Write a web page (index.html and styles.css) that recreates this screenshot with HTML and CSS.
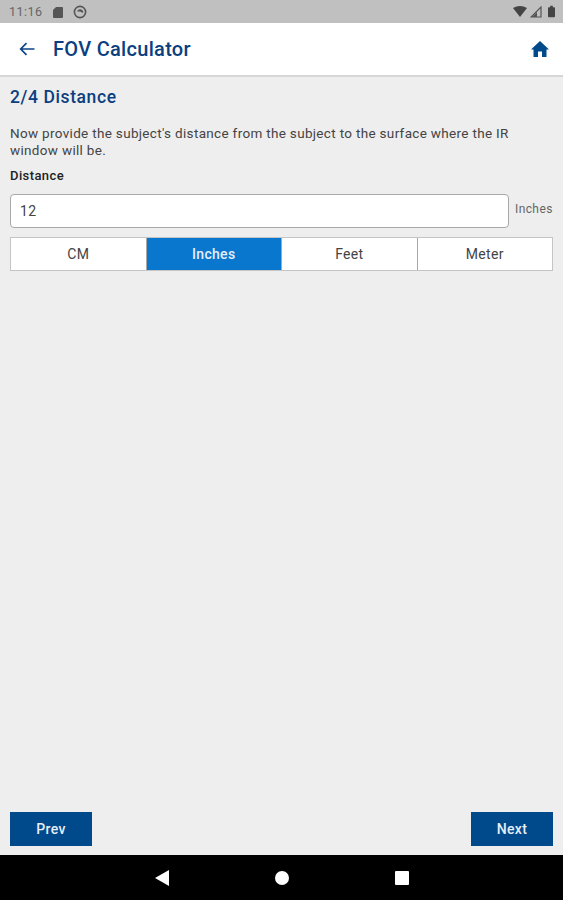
FILE: index.html
```html
<!DOCTYPE html>
<html lang="en">
<head>
    <meta charset="UTF-8">
    <meta name="viewport" content="width=device-width, initial-scale=1.0">
    <title>FOV Calculator</title>
    <link rel="stylesheet" href="styles.css">
</head>
<body>
    <div class="screen">
        <div class="status-bar">
            <div class="status-left">
                <span class="status-time">11:16</span>
                <svg class="status-icon" width="10" height="12" viewBox="0 0 10 12"><path d="M3 1h6a1 1 0 0 1 1 1v9a1 1 0 0 1-1 1H1a1 1 0 0 1-1-1V4z" fill="#555"/></svg>
                <svg class="status-icon" width="14" height="14" viewBox="0 0 14 14"><circle cx="7" cy="7" r="5.6" fill="none" stroke="#555" stroke-width="1.6"/><path d="M4 6.5 A3.2 3.2 0 0 1 10 6 L10.2 8 L7 6.6 Z" fill="#555"/></svg>
            </div>
            <div class="status-right">
                <svg width="14" height="11" viewBox="0 0 14 11"><path d="M0 2 Q7 -2 14 2 L7 11 Z" fill="#444"/></svg>
                <svg width="12" height="12" viewBox="0 0 12 12"><path d="M11 1 V11 H1 Z" fill="none" stroke="#555" stroke-width="1.2"/><path d="M7 6 V11 H2 Z" fill="#555"/></svg>
                <svg class="battery-icon" width="7" height="13" viewBox="0 0 8 13"><path d="M2.5 0h3v1.5H7a1 1 0 0 1 1 1V12a1 1 0 0 1-1 1H1a1 1 0 0 1-1-1V2.500a1 1 0 0 1 1-1h1.500z" fill="#444"/></svg>
            </div>
        </div>

        <header class="app-bar">
            <svg class="back-icon" width="16" height="14" viewBox="0 0 16 14"><path d="M15.500 7H1.800M7.500 1.200 1.700 7l5.800 5.800" fill="none" stroke="#0b4586" stroke-width="1.700"/></svg>
            <h1 class="app-title">FOV Calculator</h1>
            <svg class="home-icon" width="18" height="16" viewBox="0 0 18 16"><path d="M9 0 18 8.500H15.500V16H11V10.500H7V16H2.500V8.500H0Z" fill="#004a8c"/></svg>
        </header>

        <main class="content">
            <h2 class="step-title">2/4 Distance</h2>
            <p class="intro">Now provide the subject's distance from the subject to the surface where the IR window will be.</p>
            <label class="field-label" for="distance">Distance</label>
            <div class="field-row">
                <input class="field-input" id="distance" type="text" value="12">
                <span class="field-unit">Inches</span>
            </div>
            <div class="unit-tabs">
                <button class="unit-tab">CM</button>
                <button class="unit-tab active">Inches</button>
                <button class="unit-tab">Feet</button>
                <button class="unit-tab">Meter</button>
            </div>
            <div class="actions">
                <button class="nav-button">Prev</button>
                <button class="nav-button">Next</button>
            </div>
        </main>

        <nav class="nav-bar">
            <svg width="14" height="16" viewBox="0 0 14 16"><path d="M14 0V16L0 8Z" fill="#fff"/></svg>
            <span class="nav-circle"></span>
            <span class="nav-square"></span>
        </nav>
    </div>
</body>
</html>
```

FILE: styles.css
```css
* {
    box-sizing: border-box;
}

body {
    margin: 0;
    font-family: Roboto, "Liberation Sans", sans-serif;
    background-color: #eeeeee;
}

.screen {
    display: flex;
    flex-direction: column;
    height: 900px;
}

.status-bar {
    display: flex;
    justify-content: space-between;
    align-items: center;
    height: 23px;
    padding: 0 8px 0 9px;
    background-color: #c0c0c0;
}

.status-left {
    display: flex;
    align-items: center;
    gap: 10px;
}

.status-time {
    font-size: 12.5px;
    letter-spacing: 0.5px;
    color: #666;
}

.status-right {
    display: flex;
    align-items: center;
    gap: 3px;
}

.battery-icon {
    margin-left: 3px;
}

.app-bar {
    display: flex;
    align-items: center;
    height: 54px;
    padding: 0 14px 0 19px;
    background-color: #fff;
    border-bottom: 2px solid #d6d6d6;
}

.app-title {
    flex: 1;
    margin: 0 0 0 18px;
    font-size: 20px;
    letter-spacing: 0.3px;
    font-weight: 500;
    color: #0b3f7f;
}

.content {
    flex: 1;
    display: flex;
    flex-direction: column;
    padding: 9px 10px 9px;
}

.step-title {
    margin: 0 0 17px;
    font-size: 17.500px;
    letter-spacing: 0.6px;
    line-height: 22px;
    font-weight: 500;
    color: #0b3f7f;
}

.intro {
    margin: 0 0 8px;
    font-size: 13.500px;
    letter-spacing: 0.32px;
    line-height: 17px;
    color: #444;
}

.field-label {
    font-size: 13px;
    letter-spacing: 0.4px;
    line-height: 17px;
    font-weight: 500;
    color: #222;
    margin-bottom: 10px;
}

.field-row {
    display: flex;
    align-items: center;
    gap: 6px;
    margin-bottom: 9px;
}

.field-input {
    flex: 1;
    min-width: 0;
    height: 34px;
    padding: 0 9px;
    font-family: inherit;
    font-size: 14px;
    letter-spacing: 0.4px;
    color: #444;
    background-color: #fff;
    border: 1px solid #a8a8a8;
    border-radius: 4px;
}

.field-unit {
    width: 38px;
    padding-bottom: 4px;
    font-size: 12px;
    letter-spacing: 0.4px;
    white-space: nowrap;
    color: #666;
}

.unit-tabs {
    display: flex;
    height: 34px;
    border: 1px solid #c4c4c4;
}

.unit-tab {
    flex: 1;
    padding: 0;
    font-family: inherit;
    font-size: 14px;
    letter-spacing: 0.3px;
    color: #444;
    background-color: #fff;
    border: none;
    border-right: 1px solid #a8a8a8;
}

.unit-tab:last-child {
    border-right: none;
}

.unit-tab.active {
    font-weight: 500;
    color: #e4eefa;
    background-color: #0a77cf;
}

.actions {
    margin-top: auto;
    display: flex;
    justify-content: space-between;
}

.nav-button {
    width: 82px;
    height: 34px;
    padding: 0;
    font-family: inherit;
    font-size: 14px;
    letter-spacing: 0.3px;
    font-weight: 500;
    color: #e8eef6;
    background-color: #004a8c;
    border: none;
}

.nav-bar {
    display: flex;
    align-items: center;
    justify-content: center;
    gap: 106px;
    height: 45px;
    background-color: #000;
}

.nav-circle {
    width: 14px;
    height: 14px;
    border-radius: 50%;
    background-color: #fff;
}

.nav-square {
    width: 14px;
    height: 14px;
    border-radius: 1px;
    background-color: #fff;
}
```
